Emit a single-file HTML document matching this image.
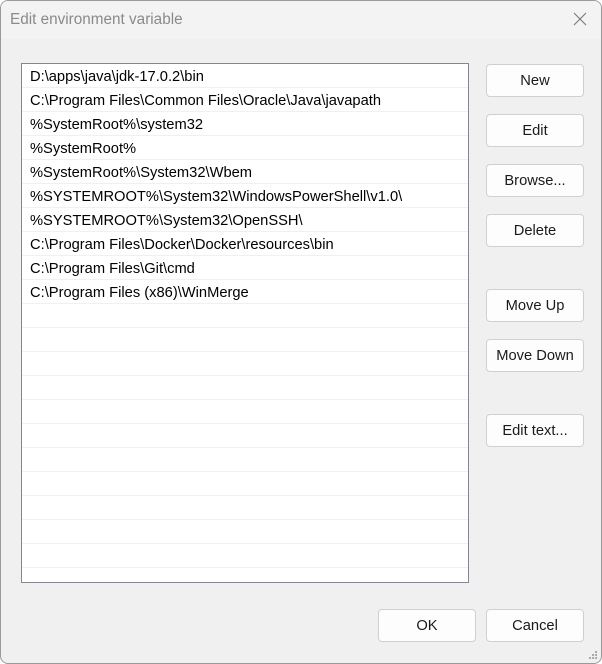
<!DOCTYPE html>
<html><head><style>
*{margin:0;padding:0;box-sizing:border-box}
body{width:602px;height:664px;overflow:hidden;background:#fff;font-family:"Liberation Sans",sans-serif;font-size:14.7px;color:#000}
.win{position:absolute;left:0;top:0;width:602px;height:664px;background:#f0f0f0;border:1px solid #9a9a9a;border-radius:8px;overflow:hidden}
.title{position:absolute;left:0;top:0;width:600px;height:38px;background:#f3f3f3}
.title span{position:absolute;left:9px;top:10px;color:#8a8a8a;font-size:15.3px}
.close{position:absolute;left:571px;top:10px}
.list{position:absolute;left:20px;top:62px;width:448px;height:520px;background:#fff;border:1px solid #828790;overflow:hidden}
.row{height:24px;border-bottom:1px solid #f0f0f0;padding-left:8px;padding-top:2px;line-height:22px;white-space:nowrap}
.btn{position:absolute;width:98px;height:33px;background:#fdfdfd;border:1px solid #d0d0d0;border-radius:4px;text-align:center;line-height:33px;color:#1a1a1a}
</style></head><body>
<div class="win">
<div class="title"><span>Edit environment variable</span>
<svg class="close" width="16" height="16"><path d="M2 2L14 14M14 2L2 14" stroke="#777" stroke-width="1.1"/></svg></div>
<div class="list">
<div class="row">D:\apps\java\jdk-17.0.2\bin</div>
<div class="row">C:\Program Files\Common Files\Oracle\Java\javapath</div>
<div class="row">%SystemRoot%\system32</div>
<div class="row">%SystemRoot%</div>
<div class="row">%SystemRoot%\System32\Wbem</div>
<div class="row">%SYSTEMROOT%\System32\WindowsPowerShell\v1.0\</div>
<div class="row">%SYSTEMROOT%\System32\OpenSSH\</div>
<div class="row">C:\Program Files\Docker\Docker\resources\bin</div>
<div class="row">C:\Program Files\Git\cmd</div>
<div class="row">C:\Program Files (x86)\WinMerge</div>
<div class="row"></div><div class="row"></div><div class="row"></div><div class="row"></div><div class="row"></div><div class="row"></div><div class="row"></div><div class="row"></div><div class="row"></div><div class="row"></div><div class="row"></div>
</div>
<div class="btn" style="left:485px;top:63px">New</div>
<div class="btn" style="left:485px;top:113px">Edit</div>
<div class="btn" style="left:485px;top:163px">Browse...</div>
<div class="btn" style="left:485px;top:213px">Delete</div>
<div class="btn" style="left:485px;top:288px">Move Up</div>
<div class="btn" style="left:485px;top:338px">Move Down</div>
<div class="btn" style="left:485px;top:413px">Edit text...</div>
<div class="btn" style="left:377px;top:608px">OK</div>
<div class="btn" style="left:485px;top:608px">Cancel</div>
<svg style="position:absolute;left:587px;top:649px" width="10" height="10" fill="#aaa"><rect x="7" y="1" width="2" height="2"/><rect x="4" y="4" width="2" height="2"/><rect x="7" y="4" width="2" height="2"/><rect x="1" y="7" width="2" height="2"/><rect x="4" y="7" width="2" height="2"/><rect x="7" y="7" width="2" height="2"/></svg>
</div>
</body></html>
